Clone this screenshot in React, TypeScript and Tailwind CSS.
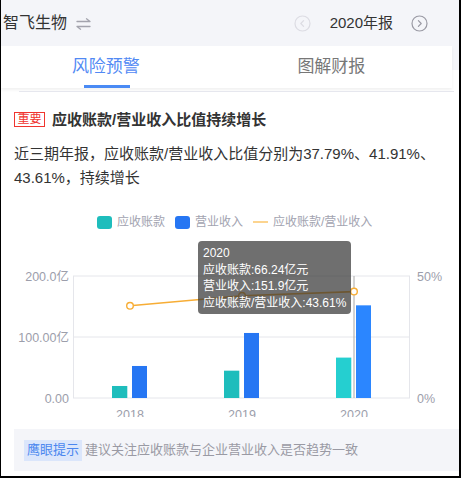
import React from "react";

const font = { fontFamily: '"Liberation Sans", "Noto Sans CJK SC", sans-serif' };

function SwapIcon() {
  return (
    <svg width="15" height="12" viewBox="0 0 15 12" fill="none" stroke="#a3a3ad" strokeWidth="1.3" strokeLinecap="round" strokeLinejoin="round">
      <path d="M1 3.5h13L10.5 0.8" />
      <path d="M14 8.5H1l3.5 2.7" />
    </svg>
  );
}

function CircleArrow({ dir, color }: { dir: "left" | "right"; color: string }) {
  return (
    <svg width="17" height="17" viewBox="0 0 17 17" fill="none" stroke={color} strokeWidth="1.2" strokeLinecap="round" strokeLinejoin="round">
      <circle cx="8.5" cy="8.5" r="7.5" />
      {dir === "left" ? <path d="M9.6 5.6 6.8 8.5l2.8 2.9" /> : <path d="M7.4 5.6l2.8 2.9-2.8 2.9" />}
    </svg>
  );
}

function Chart() {
  const bars = [
    { x: 130, a: 19.7, b: 52.5, hi: false, label: "2018" },
    { x: 242, a: 44.8, b: 106.6, hi: false, label: "2019" },
    { x: 354, a: 66.24, b: 151.9, hi: true, label: "2020" },
  ];
  const pts = [
    [130, 37.79],
    [242, 41.91],
    [354, 43.61],
  ].map(([x, p]) => [x, 398 - (p / 50) * 122]);
  const yv = (v: number) => 398 - (v / 100) * 61;
  const axisText = { fill: "#9c9eab", fontSize: 12.5 } as const;
  return (
    <div className="relative h-[187px] mt-px">
      <svg width="459" height="187" viewBox="1 230 459 187" style={font} className="block">
        {[276, 337, 398].map((y) => (
          <line key={y} x1="73" x2="410" y1={y} y2={y} stroke="#e5e6eb" strokeWidth="1" />
        ))}
        <line x1="73.5" x2="73.5" y1="276" y2="398" stroke="#e5e6eb" />
        <line x1="409.5" x2="409.5" y1="276" y2="398" stroke="#e5e6eb" />
        <text x="69" y="280.5" textAnchor="end" {...axisText}>200.0亿</text>
        <text x="69" y="341.5" textAnchor="end" {...axisText}>100.00亿</text>
        <text x="69" y="402.5" textAnchor="end" {...axisText}>0.00</text>
        <text x="417" y="280.5" {...axisText}>50%</text>
        <text x="417" y="402.5" {...axisText}>0%</text>
        {bars.map((b) => (
          <g key={b.x}>
            <rect x={b.x - 18} y={yv(b.a)} width="15.3" height={398 - yv(b.a)} fill={b.hi ? "#25cfd0" : "#1ebdbc"} />
            <rect x={b.x + 2} y={yv(b.b)} width="15" height={398 - yv(b.b)} fill={b.hi ? "#2b86ff" : "#2676f3"} />
          </g>
        ))}
        <line x1="354" x2="354" y1="276" y2="398" stroke="#a8a8a8" strokeWidth="1" />
        <polyline points={pts.map((p) => p.join(",")).join(" ")} fill="none" stroke="#f7ad35" strokeWidth="1.6" />
        {pts.map(([x, y]) => (
          <circle key={x} cx={x} cy={y} r="3.3" fill="#fff" stroke="#f7ad35" strokeWidth="1.4" />
        ))}
        {bars.map((b) => (
          <text key={b.x} x={b.x} y="419" textAnchor="middle" {...axisText}>
            {b.label}
          </text>
        ))}
      </svg>
      <div
        className="absolute left-[197px] top-[11px] rounded-[4px] bg-[rgba(50,50,50,0.7)] px-[5px] pt-[4px] pb-[3px] text-[12px] leading-[16.6px] text-white whitespace-nowrap"
        style={font}
      >
        <div>2020</div>
        <div>应收账款:66.24亿元</div>
        <div>营业收入:151.9亿元</div>
        <div>应收账款/营业收入:43.61%</div>
      </div>
    </div>
  );
}

export default function App() {
  return (
    <div className="w-[461px] h-[478px] overflow-hidden bg-white border-l border-r-2 border-b-2 border-black box-border" style={font}>
      {/* header */}
      <div className="h-[46px] bg-[#f4f5f9] flex items-center">
        <span className="ml-[2px] text-[16px] text-[#333]">智飞生物</span>
        <span className="ml-[9px] mt-[1px] flex"><SwapIcon /></span>
        <div className="ml-auto flex items-center">
          <CircleArrow dir="left" color="#dcdce3" />
          <span className="ml-[19px] mr-[18px] text-[15px] text-[#333]">2020年报</span>
          <span className="mr-[31px] flex"><CircleArrow dir="right" color="#9a9aa4" /></span>
        </div>
      </div>
      {/* tabs */}
      <div className="bg-[linear-gradient(#f4f5f9_24px,#ffffff_24px)]">
        <div className="w-[451px] h-[42px] bg-white flex shadow-[0_2px_3px_rgba(0,0,0,0.06)]">
          <div className="w-[213px] relative flex items-center justify-center text-[17px] text-[#5189f4]">
            风险预警
            <div className="absolute bottom-0 left-[83px] w-[46px] h-[3px] bg-[#4a8af4]" />
          </div>
          <div className="w-[245px] flex items-center justify-center text-[17px] text-[#777]">图解财报</div>
        </div>
      </div>
      <div className="pt-[3px]">
        <div className="ml-[18px] mr-[5px] h-px bg-[#e6e7ee]" />
      </div>
      {/* content */}
      <div className="pl-[13px] pr-[10px]">
        <div className="mt-[19px] h-[17px] flex items-center">
          <span className="w-[31px] h-[15px] border border-[#f0352f] text-[#f0352f] text-[12px] leading-[13px] flex items-center justify-center">重要</span>
          <span className="ml-[7px] text-[15px] font-bold text-[#333] leading-[17px]">应收账款/营业收入比值持续增长</span>
        </div>
        <p className="mt-[14px] text-[15px] leading-[24px] text-[#333]">
          近三期年报，应收账款/营业收入比值分别为37.79%、41.91%、43.61%，持续增长
        </p>
      </div>
      {/* legend */}
      <div className="mt-[25px] h-[14px] flex items-center text-[12px] text-[#a2a3b0]">
        <span className="ml-[96px] w-[15px] h-[13px] rounded-[3px] bg-[#1ebdbc]" />
        <span className="ml-[5px]">应收账款</span>
        <span className="ml-[10px] w-[15px] h-[13px] rounded-[3px] bg-[#2676f3]" />
        <span className="ml-[5px]">营业收入</span>
        <span className="ml-[10px] w-[15px] h-[2px] bg-[#fcd48f]" />
        <span className="ml-[5px]">应收账款/营业收入</span>
      </div>
      <Chart />
      {/* tip */}
      <div className="mt-[12px] ml-[13px] h-[42px] bg-[#f4f5f9] flex items-center">
        <span className="ml-[10px] h-[21px] px-[3px] bg-[#dbe6fb] text-[#4a86ef] text-[13px] flex items-center">鹰眼提示</span>
        <span className="ml-[3px] text-[13px] text-[#9a9aa4]">建议关注应收账款与企业营业收入是否趋势一致</span>
      </div>
    </div>
  );
}
